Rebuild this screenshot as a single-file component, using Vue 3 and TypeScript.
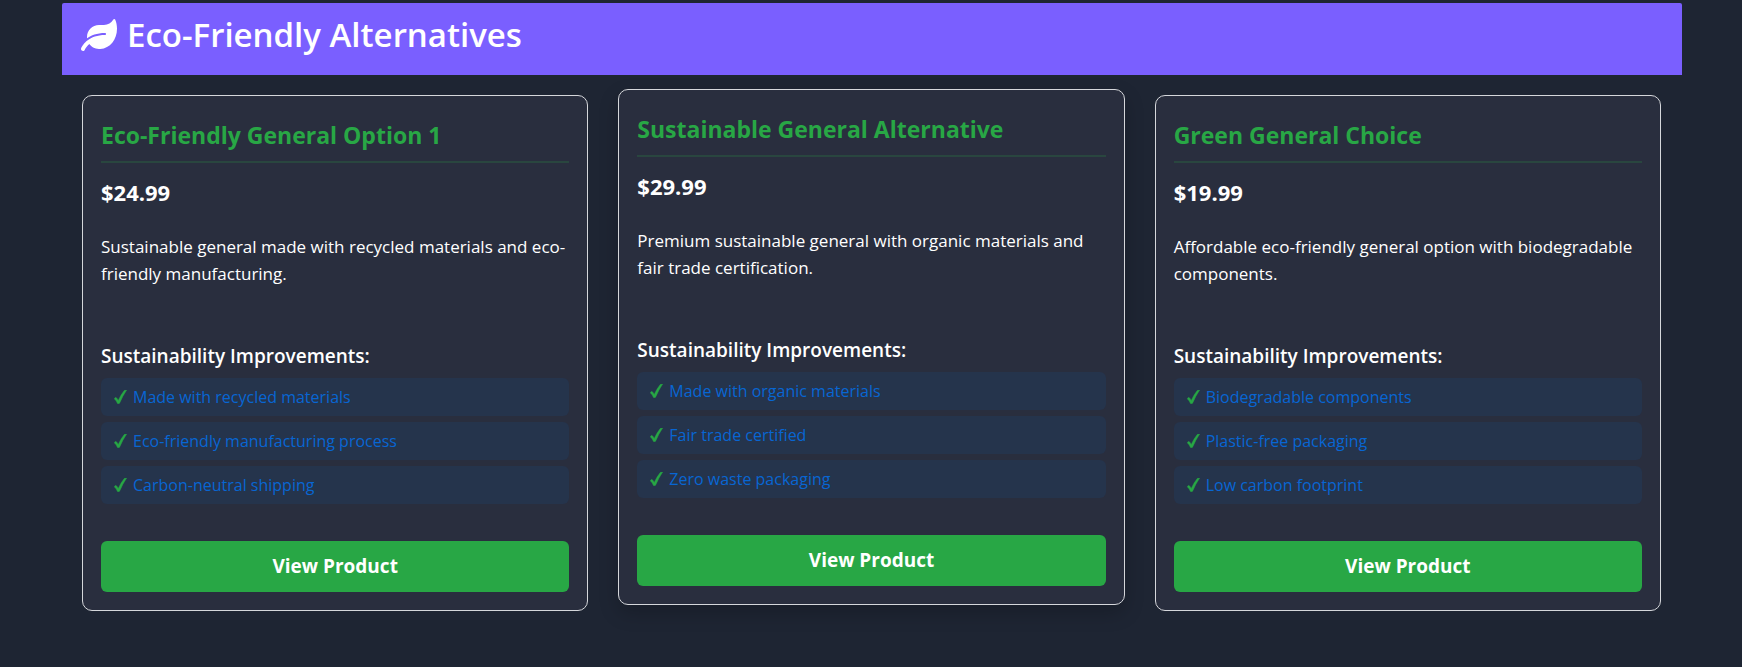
<script setup lang="ts">
interface Product {
  name: string
  price: string
  description: string
  improvements: string[]
  raised?: boolean
}

const products: Product[] = [
  {
    name: 'Eco-Friendly General Option 1',
    price: '$24.99',
    description: 'Sustainable general made with recycled materials and eco-friendly manufacturing.',
    improvements: ['Made with recycled materials', 'Eco-friendly manufacturing process', 'Carbon-neutral shipping'],
  },
  {
    name: 'Sustainable General Alternative',
    price: '$29.99',
    description: 'Premium sustainable general with organic materials and fair trade certification.',
    improvements: ['Made with organic materials', 'Fair trade certified', 'Zero waste packaging'],
    raised: true,
  },
  {
    name: 'Green General Choice',
    price: '$19.99',
    description: 'Affordable eco-friendly general option with biodegradable components.',
    improvements: ['Biodegradable components', 'Plastic-free packaging', 'Low carbon footprint'],
  },
]
</script>

<template>
  <main class="page">
    <section class="panel">
      <header class="panel-header">
        <svg class="leaf" viewBox="0 0 576 512" aria-hidden="true">
          <path
            fill="currentColor"
            d="M546.2 9.7c-5.6-12.5-21.6-13-28.3-1.2C486.9 62.4 431.4 96 368 96h-80C182 96 96 182 96 288c0 7 .8 13.7 1.5 20.5C161.3 262.8 253.4 224 384 224c8.8 0 16 7.2 16 16s-7.2 16-16 16C132.6 256 26 410.1 2.4 468c-6.6 16.3 1.2 34.9 17.5 41.6 16.4 6.8 35-1.1 41.8-17.3 1.5-3.6 20.9-47.9 71.9-90.6 32.4 43.9 94 85.8 174.9 77.2C465.5 467.5 576 326.7 576 154.3c0-50.2-10.8-102.2-29.8-144.6z"
          />
        </svg>
        <h2>Eco-Friendly Alternatives</h2>
      </header>
      <div class="cards">
        <article v-for="p in products" :key="p.name" class="card" :class="{ raised: p.raised }">
          <h3>{{ p.name }}</h3>
          <p class="price">{{ p.price }}</p>
          <p class="description">{{ p.description }}</p>
          <h4>Sustainability Improvements:</h4>
          <ul>
            <li v-for="item in p.improvements" :key="item">
              <svg class="tick" viewBox="0 0 13 14" aria-hidden="true">
                <path
                  fill="currentColor"
                  stroke="currentColor"
                  stroke-width="0.4"
                  d="M0.2 8.7Q1 7.3 2.1 7.5Q3.4 8.4 4.2 10.6Q6.8 4.6 10.4 0.3L12.7 0Q8.6 6 5.6 13.2Q4.7 14.2 3.5 13.6Q2.2 10.4 0.2 8.7Z"
                />
              </svg>
              <span>{{ item }}</span>
            </li>
          </ul>
          <button type="button">View Product</button>
        </article>
      </div>
    </section>
  </main>
</template>

<style>
body {
  margin: 0;
  background: #1e2533;
}
</style>

<style scoped>
.page {
  box-sizing: border-box;
  min-height: 100vh;
  padding: 3px 60px 40px 62px;
  background: #1e2533;
  color: #fff;
  font-family: "Segoe UI", "Open Sans", "Noto Sans", sans-serif;
}
.panel-header {
  display: flex;
  align-items: flex-start;
  gap: 10px;
  box-sizing: border-box;
  min-height: 72px;
  padding: 12px 19px;
  background: #7a5fff;
  border-radius: 2px 2px 0 0;
}
.leaf {
  width: 36px;
  height: 32px;
  margin-top: 4px;
}
h2,
h3,
h4,
p,
ul {
  margin: 0;
}
h2 {
  font-size: 33px;
  font-weight: 600;
  line-height: 40px;
}
.cards {
  display: grid;
  grid-template-columns: repeat(3, 1fr);
  gap: 30px;
  padding: 20px 21px 0 20px;
}
.card {
  display: flex;
  flex-direction: column;
  padding: 18px;
  background: #292e3e;
  border: 1px solid #d5d7db;
  border-radius: 10px;
}
.raised {
  transform: translateY(-6px);
  box-shadow: 0 8px 20px rgba(0, 0, 0, 0.2);
}
h3 {
  padding: 4px 0 9px;
  border-bottom: 2px solid #29463f;
  color: #28a745;
  font-size: 23px;
  font-weight: 700;
  line-height: 34px;
}
.price {
  margin-top: 12px;
  font-size: 22px;
  font-weight: 700;
  line-height: 34px;
}
.description {
  min-height: 100px;
  margin-top: 24px;
  font-size: 17px;
  line-height: 27px;
}
h4 {
  margin-top: 10px;
  font-size: 19px;
  font-weight: 600;
  line-height: 27px;
}
ul {
  display: grid;
  gap: 6px;
  margin-top: 8px;
  padding: 0;
  list-style: none;
}
li {
  display: flex;
  align-items: center;
  gap: 6px;
  padding: 5px 13px;
  background: #25344c;
  border-radius: 6px;
  color: #0866d3;
  font-size: 16px;
  line-height: 28px;
}
.tick {
  width: 13px;
  height: 14px;
  color: #28a745;
}
button {
  margin-top: 37px;
  padding: 12px;
  background: #28a745;
  border: 0;
  border-radius: 6px;
  color: #fff;
  font: 700 19px/27px "Segoe UI", "Open Sans", "Noto Sans", sans-serif;
  cursor: pointer;
}
@media (max-width: 900px) {
  .page {
    padding-inline: 12px;
  }
  .cards {
    grid-template-columns: 1fr;
  }
}
</style>
